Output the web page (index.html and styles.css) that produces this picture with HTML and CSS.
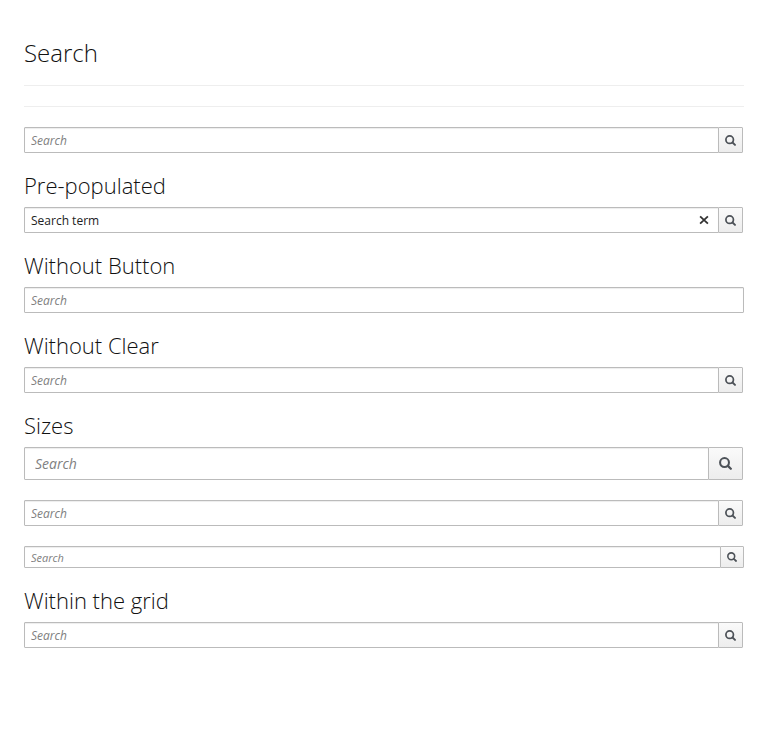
FILE: index.html
```html
<!DOCTYPE html>
<html lang="en">
<head>
<meta charset="utf-8">
<title>Search</title>
<link rel="stylesheet" href="styles.css">
</head>
<body>
<svg class="sprite" width="0" height="0" aria-hidden="true">
  <symbol id="search" viewBox="0 0 12 12"><circle cx="5.1" cy="5.1" r="4.1" fill="none" stroke="currentColor" stroke-width="1.9"/><path d="M8.2 8.2L10.9 10.8" stroke="currentColor" stroke-width="2.1" stroke-linecap="round"/></symbol>
</svg>
<main class="page">
  <h1>Search</h1>
  <hr>
  <hr>
  <form class="search">
    <input type="text" placeholder="Search">
    <button type="button"><svg class="icon"><use href="#search"/></svg></button>
  </form>
  <h2>Pre-populated</h2>
  <form class="search">
    <input type="text" value="Search term">
    <span class="clear"><svg width="10" height="10" viewBox="0 0 10 10"><path d="M1.1 1.3L8.9 8.7M8.9 1.3L1.1 8.7" stroke="currentColor" stroke-width="1.8"/></svg></span>
    <button type="button"><svg class="icon"><use href="#search"/></svg></button>
  </form>
  <h2>Without Button</h2>
  <form class="search search-plain">
    <input type="text" placeholder="Search">
  </form>
  <h2>Without Clear</h2>
  <form class="search">
    <input type="text" placeholder="Search">
    <button type="button"><svg class="icon"><use href="#search"/></svg></button>
  </form>
  <h2>Sizes</h2>
  <form class="search search-lg">
    <input type="text" placeholder="Search">
    <button type="button"><svg class="icon"><use href="#search"/></svg></button>
  </form>
  <form class="search">
    <input type="text" placeholder="Search">
    <button type="button"><svg class="icon"><use href="#search"/></svg></button>
  </form>
  <form class="search search-sm">
    <input type="text" placeholder="Search">
    <button type="button"><svg class="icon"><use href="#search"/></svg></button>
  </form>
  <h2>Within the grid</h2>
  <form class="search">
    <input type="text" placeholder="Search">
    <button type="button"><svg class="icon"><use href="#search"/></svg></button>
  </form>
</main>
</body>
</html>
```
FILE: styles.css
```css
* { box-sizing: border-box; }
body {
  margin: 0;
  background: #fff;
  color: #222;
  font: 12px/20px "Open Sans", sans-serif;
}
.sprite { position: absolute; }
.page { padding: 40px 24px 0; }
h1, h2 { margin: 0; font-weight: 300; color: #111; }
h1 { font-size: 24px; line-height: 26px; margin-bottom: 19px; }
h2 { font-size: 22px; line-height: 24px; height: 24px; margin-bottom: 10px; }
hr { margin: 0 0 20px; border: 0; border-top: 1px solid #eee; }
.search {
  position: relative;
  display: flex;
  height: 26px;
  margin: 0 1px 20px 0;
}
.search input {
  flex: 1;
  min-width: 0;
  height: 100%;
  padding: 2px 6px;
  border: 1px solid #bbb;
  border-radius: 1px;
  background: #fff;
  box-shadow: inset 0 1px 1px rgba(0, 0, 0, .075);
  color: #222;
  font: inherit;
  outline: 0;
}
.search input::placeholder { color: #808080; font-style: italic; opacity: 1; }
.search button {
  display: flex;
  align-items: center;
  justify-content: center;
  width: 25px;
  margin-left: -1px;
  padding: 0;
  border: 1px solid #bbb;
  border-radius: 1px;
  background: linear-gradient(#fafafa, #ededed);
  color: #4d5258;
}
.icon { display: block; width: 11px; height: 11px; }
.clear { position: absolute; right: 34px; top: 8px; line-height: 0; color: #333; }
.search-plain, .search-sm { margin-right: 0; }
.search-lg { height: 33px; }
.search-lg input { padding: 2px 10px; font-size: 14px; }
.search-lg button { width: 35px; }
.search-lg .icon { width: 13px; height: 13px; }
.search-sm { height: 22px; }
.search-sm input { font-size: 11px; }
.search-sm button { width: 24px; }
.search-sm .icon { width: 10px; height: 10px; }
```
